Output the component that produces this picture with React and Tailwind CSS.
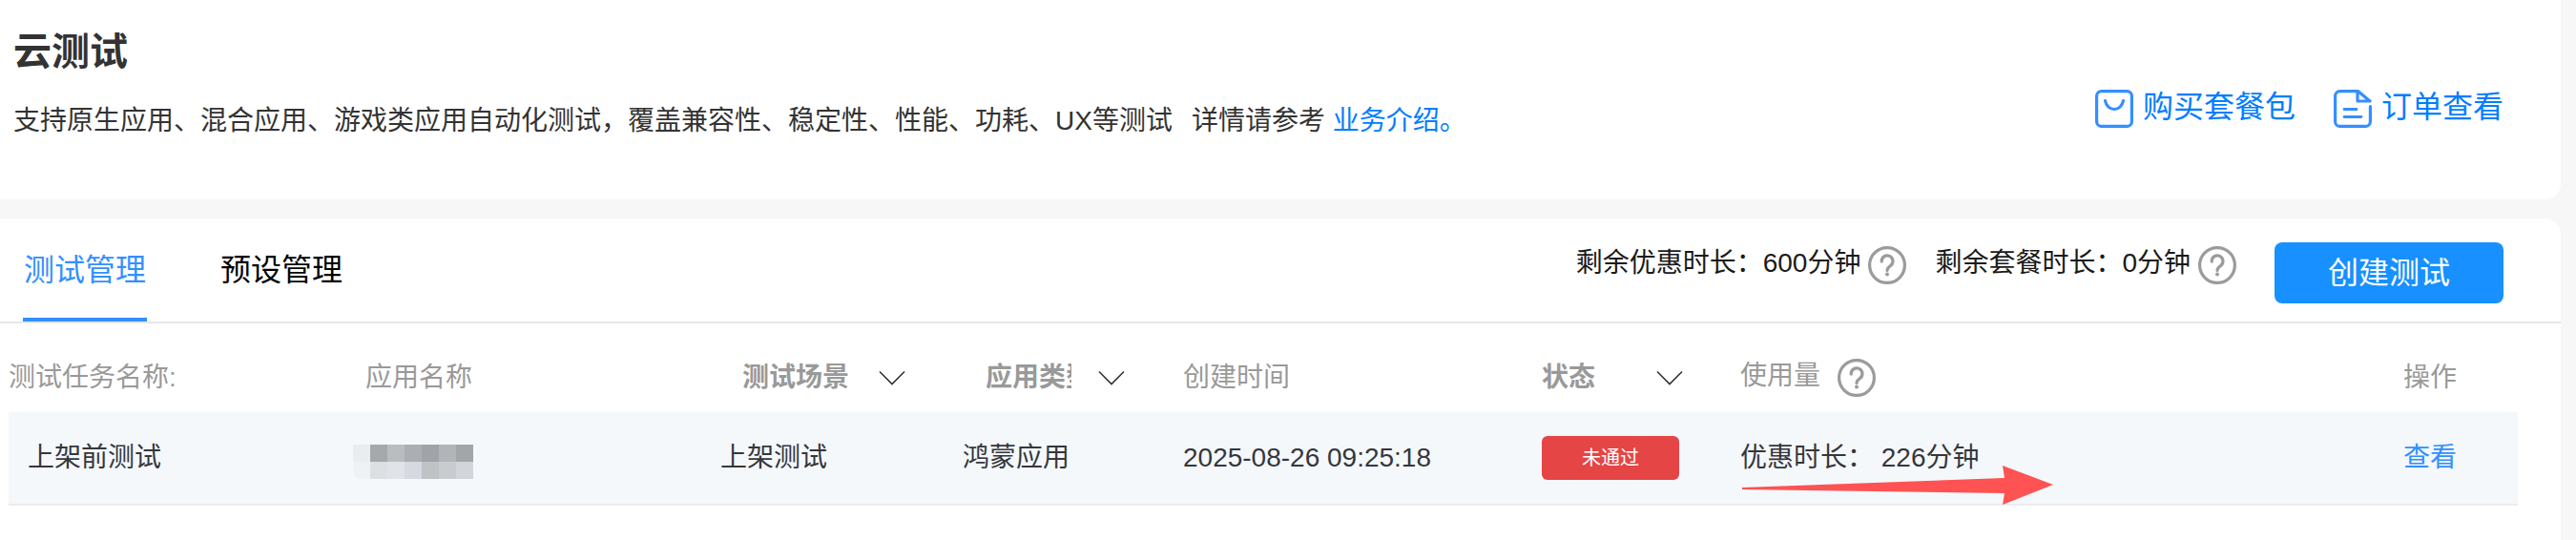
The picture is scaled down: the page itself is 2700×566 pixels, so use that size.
import { useState } from "react";
import clsx from "clsx";

const tabs = ["测试管理", "预设管理"];

const tasks = [
  {
    id: 1,
    name: "上架前测试",
    scene: "上架测试",
    type: "鸿蒙应用",
    createdAt: "2025-08-26 09:25:18",
    status: "未通过",
    usage: "226分钟",
  },
];

// colours of the masked app name, row by row
const mask = [
  "#e9edf0", "#a5a9ac", "#b9bdc0", "#abafb3", "#a0a4a9", "#b2b4b9", "#a2a6a9",
  "#eef2f5", "#dce0e3", "#e0e3e8", "#d6d9df", "#bfc3c6", "#c8ccce", "#d2d5da",
];

function BagIcon() {
  return (
    <svg className="h-10 w-10" viewBox="0 0 40 40" fill="none" stroke="#338fff" strokeWidth="3.200" strokeLinecap="round">
      <rect x="1.600" y="1.600" width="36.800" height="36.800" rx="5" />
      <path d="M10.500 11.500c1 5.500 5 9 9.500 9s8.500-3.500 9.500-9" />
    </svg>
  );
}

function OrderIcon() {
  return (
    <svg className="h-10 w-10" viewBox="0 0 40 40" fill="none" stroke="#338fff" strokeWidth="3.200" strokeLinecap="round" strokeLinejoin="round">
      <path d="M38.400 17.500V33.400a5 5 0 0 1-5 5H6.600a5 5 0 0 1-5-5V6.600a5 5 0 0 1 5-5H25.500L38 12H25V2" />
      <path d="M11 20.500h13M11 28.500h18" strokeWidth="2.800" />
    </svg>
  );
}

function Help({ label }) {
  return (
    <button type="button" aria-label={label} className="shrink-0">
      <svg className="h-10 w-10" viewBox="0 0 40 40" fill="none" stroke="#9b9b9b" strokeWidth="3.200">
        <circle cx="20" cy="20" r="18.400" />
        <path d="M14.200 16.200a5.900 5.900 0 1 1 9.400 4.300c-2.200 1.600-3.600 2.600-3.600 5" strokeLinecap="round" />
        <circle cx="20" cy="29.500" r="2" fill="#9b9b9b" stroke="none" />
      </svg>
    </button>
  );
}

function Duration({ label, value }) {
  return (
    <div className="flex items-start text-[#1a1a1a]">
      <span className="mr-2 leading-9">
        {label}：{value}
      </span>
      <Help label={label} />
    </div>
  );
}

function Filter({ label, className }) {
  return (
    <div className={clsx("relative", className)}>
      <select
        aria-label={label}
        className="h-10 w-full appearance-none bg-transparent pr-14 font-bold text-[#999] outline-none"
      >
        <option>{label}</option>
      </select>
      <svg className="pointer-events-none absolute right-0 top-3 h-4 w-7" viewBox="0 0 28 16" fill="none" stroke="#333" strokeWidth="1.600">
        <path d="M1 1.500 14 14.500 27 1.500" />
      </svg>
    </div>
  );
}

export default function App() {
  const [activeTab, setActiveTab] = useState(0);

  return (
    <div className="flex min-h-screen flex-col gap-5 bg-[#f7f7f7] pr-4 font-['Liberation_Sans','Noto_Sans_CJK_SC',sans-serif] text-[28px] leading-10 text-[#333]">
      <header className="flex items-start justify-between rounded-br-2xl bg-white pb-[62px] pl-3.5 pr-[60px] pt-[26px]">
        <div>
          <h1 className="text-[40px] font-bold leading-[56px]">云测试</h1>
          <p className="mt-[25px]">
            支持原生应用、混合应用、游戏类应用自动化测试，覆盖兼容性、稳定性、性能、功耗、UX等测试
            <span className="ml-5">详情请参考</span>{" "}
            <a href="#intro" className="text-[#007dff]">
              业务介绍。
            </a>
          </p>
        </div>
        <nav className="flex gap-10 pt-[68px] text-[32px] text-[#007dff]">
          <a href="#buy" className="flex gap-2.5">
            <BagIcon />
            <span className="leading-9">购买套餐包</span>
          </a>
          <a href="#orders" className="flex gap-2.5">
            <OrderIcon />
            <span className="leading-9">订单查看</span>
          </a>
        </nav>
      </header>

      <main className="grow rounded-tr-2xl bg-white">
        <div className="flex h-[110px] justify-between border-b-2 border-[#e3e7eb] pl-6 pr-[60px]">
          <div role="tablist" className="flex gap-[76px] text-[32px]">
            {tabs.map((tab, index) => (
              <button
                key={tab}
                type="button"
                role="tab"
                aria-selected={activeTab === index}
                onClick={() => setActiveTab(index)}
                className={clsx(
                  "border-b-4 px-px pt-1",
                  activeTab === index ? "border-[#338fff] text-[#338fff]" : "border-transparent text-black"
                )}
              >
                {tab}
              </button>
            ))}
          </div>
          <div className="flex items-start pt-[25px]">
            <div className="mr-10 flex gap-[30px] pt-1">
              <Duration label="剩余优惠时长" value="600分钟" />
              <Duration label="剩余套餐时长" value="0分钟" />
            </div>
            <button type="button" className="h-16 w-60 rounded-lg bg-[#1890ff] text-[32px] text-white">
              创建测试
            </button>
          </div>
        </div>

        <div className="pl-[9px] pr-[45px] pt-5">
          <table className="w-full table-fixed text-left">
            <colgroup>
              <col className="w-[361px]" />
              <col className="w-[385px]" />
              <col className="w-[254px]" />
              <col className="w-[231px]" />
              <col className="w-[376px]" />
              <col className="w-[208px]" />
              <col />
              <col className="w-[120px]" />
            </colgroup>
            <thead className="text-[#999]">
              <tr className="h-[73px]">
                <th className="font-normal">测试任务名称:</th>
                <th className="pl-[13px] font-normal">应用名称</th>
                <th className="pl-[23px]">
                  <Filter label="测试场景" className="w-[171px]" />
                </th>
                <th className="pl-6">
                  <Filter label="应用类型" className="w-[146px]" />
                </th>
                <th className="font-normal">创建时间</th>
                <th>
                  <Filter label="状态" className="w-[148px]" />
                </th>
                <th className="font-normal">
                  <div className="flex items-start">
                    <span className="mr-[18px] leading-9">使用量</span>
                    <Help label="使用量" />
                  </div>
                </th>
                <th className="font-normal">操作</th>
              </tr>
            </thead>
            <tbody className="text-[#35373c]">
              {tasks.map((task) => (
                <tr key={task.id} className="h-[97px] border-b-2 border-[#ebecee] bg-[#f4f8fb]">
                  <td className="pl-5">{task.name}</td>
                  <td>
                    <div className="mt-2 grid w-[126px] grid-cols-7 overflow-hidden rounded-bl-lg">
                      {mask.map((color, index) => (
                        <span key={index} className="h-[18px]" style={{ background: color }} />
                      ))}
                    </div>
                  </td>
                  <td>{task.scene}</td>
                  <td>{task.type}</td>
                  <td>{task.createdAt}</td>
                  <td>
                    <span className="flex h-[46px] w-36 items-center justify-center rounded-md bg-[#e54545] text-xl text-white">
                      {task.status}
                    </span>
                  </td>
                  <td className="relative">
                    优惠时长： {task.usage}
                    <svg className="absolute left-0.5 top-14 h-[41px] w-[326px]" viewBox="0 0 326 41" fill="#ff5252">
                      <path d="M0 23 275 13 273 0 326 20 273 41 275 29 0 25z" />
                    </svg>
                  </td>
                  <td>
                    <a href="#detail" className="text-[#338fff]">
                      查看
                    </a>
                  </td>
                </tr>
              ))}
            </tbody>
          </table>
        </div>
      </main>
    </div>
  );
}
